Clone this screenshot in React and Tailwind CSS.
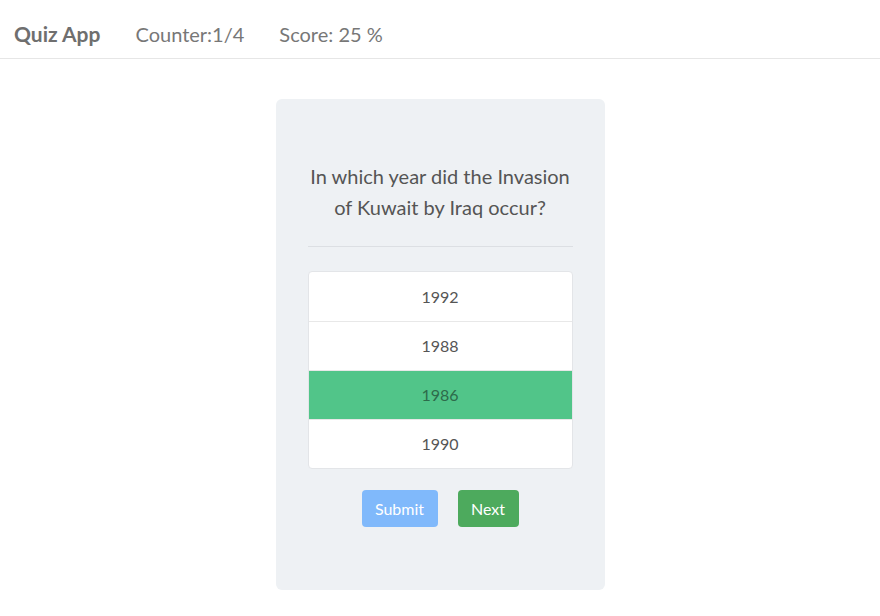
const answers = ["1992", "1988", "1986", "1990"];

export default function App() {
  const selected = "1986";

  return (
    <div className="min-h-[616px] bg-white font-['Lato','Noto_Sans',sans-serif] text-[#555]">
      <header className="flex h-[59px] items-center border-b border-[#e6e6e6] pl-[14px] pt-[10px]">
        <span className="text-[21px] font-bold text-[#6f6f6f]">Quiz App</span>
        <span className="ml-[35px] text-[20px] text-[#777]">Counter:1/4</span>
        <span className="ml-[35px] text-[20px] text-[#777]">Score: 25 %</span>
      </header>

      <div className="flex justify-center pt-[40px]">
        <div className="h-[491px] w-[329px] rounded-md bg-[#eef1f4] px-[32px] pt-[62px]">
          <p className="text-center text-[20px] leading-[31px] text-[#555]">
            In which year did the Invasion of Kuwait by Iraq occur?
          </p>

          <div className="mt-[23px] h-px bg-[#dcdfe3]" />

          <ul className="mt-[24px] overflow-hidden rounded-[4px] border border-[#e3e5e8] bg-white">
            {answers.map((a, i) => (
              <li
                key={a}
                className={`flex h-[49px] items-center justify-center text-[16px] ${
                  i > 0 ? "border-t border-[#e8e8e8]" : ""
                } ${a === selected ? "bg-[#51c589] text-[#2d6b4b]" : "text-[#555]"}`}
              >
                {a}
              </li>
            ))}
          </ul>

          <div className="mt-[21px] flex justify-center gap-[20px]">
            <button className="h-[37px] w-[76px] rounded-[4px] bg-[#80b9fb] text-[16px] text-white">
              Submit
            </button>
            <button className="h-[37px] w-[61px] rounded-[4px] bg-[#4daa5d] text-[16px] text-white">
              Next
            </button>
          </div>
        </div>
      </div>
    </div>
  );
}
